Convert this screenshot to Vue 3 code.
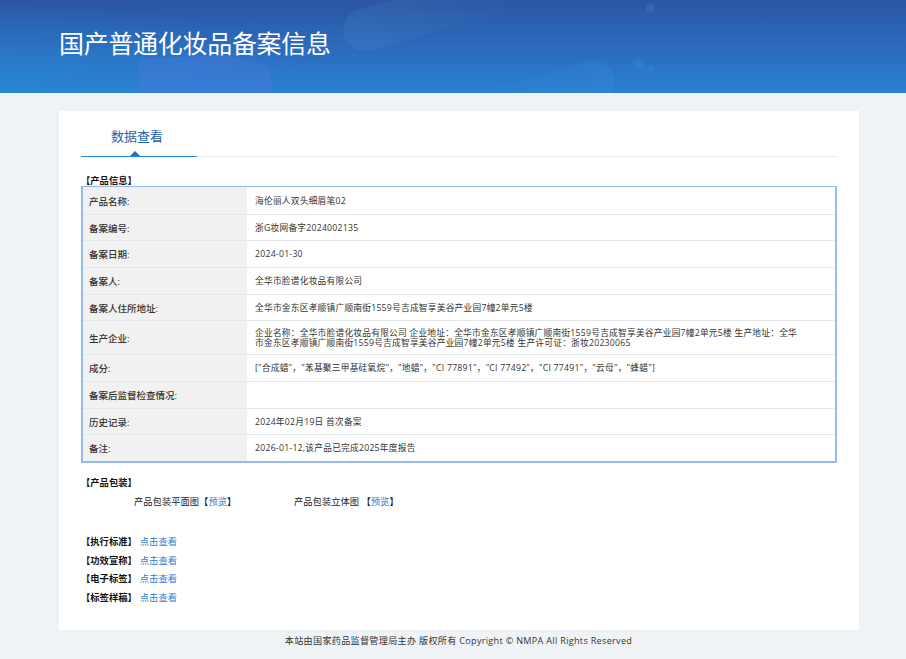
<script setup>
const rows = [
  { label: '产品名称:', value: '海伦丽人双头细眉笔02', height: 27 },
  { label: '备案编号:', value: '浙G妆网备字2024002135', height: 26 },
  { label: '备案日期:', value: '2024-01-30', height: 27 },
  { label: '备案人:', value: '全华市脸谱化妆品有限公司', height: 27 },
  { label: '备案人住所地址:', value: '全华市金东区孝顺镇广顺南街1559号吉成智享美谷产业园7幢2单元5楼', height: 26 },
  {
    label: '生产企业:',
    value: '企业名称:全华市脸谱化妆品有限公司 企业地址:全华市金东区孝顺镇广顺南街1559号吉成智享美谷产业园7幢2单元5楼 生产地址:全华市金东区孝顺镇广顺南街1559号吉成智享美谷产业园7幢2单元5楼 生产许可证:浙妆20230065'.replaceAll(':', '\uFF1A'),
    height: 34,
  },
  {
    label: '成分:',
    value: '["合成蜡","苯基聚三甲基硅氧烷","地蜡","CI 77891","CI 77492","CI 77491","云母","蜂蜡"]'.replaceAll('","', '"\uFF0C"'),
    height: 27,
  },
  { label: '备案后监督检查情况:', value: '', height: 27 },
  { label: '历史记录:', value: '2024年02月19日 首次备案', height: 26 },
  { label: '备注:', value: '2026-01-12,该产品已完成2025年度报告', height: 27 },
]

const links = [
  { label: '【执行标准】', height: 19 },
  { label: '【功效宣称】', height: 19 },
  { label: '【电子标签】', height: 18 },
  { label: '【标签样稿】', height: 19 },
]
</script>

<template>
  <div class="page">
    <header class="banner">
      <span class="banner__blob banner__blob--top"></span>
      <span class="banner__blob banner__blob--low"></span>
      <span class="banner__block"></span>
      <span class="banner__dot banner__dot--a"></span>
      <span class="banner__dot banner__dot--b"></span>
      <span class="banner__dot banner__dot--c"></span>
      <h1>国产普通化妆品备案信息</h1>
    </header>

    <main class="card">
      <div class="tabs">
        <div class="tabs__item">数据查看</div>
      </div>

      <div class="section-title section-title--first">【产品信息】</div>
      <table class="info">
        <tbody>
          <tr v-for="row in rows" :key="row.label" :style="{ height: row.height + 'px' }">
            <th>{{ row.label }}</th>
            <td>{{ row.value }}</td>
          </tr>
        </tbody>
      </table>

      <div class="section-title section-title--pack">【产品包装】</div>
      <div class="pack">
        <span class="pack__item">产品包装平面图<i>【<a href="#">预览</a>】</i></span>
        <span class="pack__item">产品包装立体图 <i>【<a href="#">预览</a>】</i></span>
      </div>

      <div class="links">
        <div v-for="item in links" :key="item.label" class="links__row" :style="{ height: item.height + 'px' }">
          <b>{{ item.label }}</b>
          <a href="#">点击查看</a>
        </div>
      </div>
    </main>

    <footer class="footer">本站由国家药品监督管理局主办 版权所有 Copyright © NMPA All Rights Reserved</footer>
  </div>
</template>

<style>
html,
body {
  margin: 0;
  background: #f0f3f6;
}
</style>

<style scoped>
.page {
  min-height: 659px;
  background: #f0f3f6;
  font-family: 'Open Sans', 'Noto Sans CJK SC', sans-serif;
  color: #333333;
}

.banner {
  position: relative;
  height: 93px;
  overflow: hidden;
  background:
    radial-gradient(ellipse 340px 90px at 0 100%, rgba(36, 140, 212, 0.5), rgba(36, 140, 212, 0)),
    linear-gradient(180deg, #2b56a3 0%, #2c6cbf 55%, #2a80d0 100%);
}

.banner h1 {
  position: relative;
  margin: 0;
  padding: 24px 0 0 59px;
  font-family: 'Noto Sans CJK SC', sans-serif;
  font-size: 25px;
  line-height: 36px;
  font-weight: 400;
  letter-spacing: -0.3px;
  color: #ffffff;
}

.banner__blob {
  position: absolute;
  display: block;
}

.banner__blob--top {
  left: 350px;
  top: 14px;
  width: 190px;
  height: 42px;
  border-radius: 21px;
  background: linear-gradient(90deg, rgba(95, 160, 215, 0.14), rgba(95, 160, 215, 0));
  transform: rotate(-16deg);
  transform-origin: 0 100%;
}

.banner__blob--low {
  left: 462px;
  top: 76px;
  width: 155px;
  height: 42px;
  border-radius: 21px;
  background: linear-gradient(90deg, rgba(60, 155, 225, 0), rgba(60, 155, 225, 0.16));
  transform: rotate(-16deg);
}

.banner__block {
  position: absolute;
  left: 139px;
  top: 55px;
  display: block;
  width: 132px;
  height: 38px;
  background: rgba(86, 118, 225, 0.3);
  clip-path: polygon(0 4px, 66% 0, 100% 12px, 100% 100%, 0 100%);
}

.banner__dot {
  position: absolute;
  display: block;
  border-radius: 50%;
  background: rgba(60, 140, 225, 0.28);
}

.banner__dot--a {
  left: 646px;
  top: 4px;
  width: 8px;
  height: 8px;
}

.banner__dot--b {
  left: 634px;
  top: 58px;
  width: 11px;
  height: 11px;
}

.banner__dot--c {
  left: 647px;
  top: 65px;
  width: 8px;
  height: 8px;
}

.card {
  box-sizing: border-box;
  width: 800px;
  height: 519px;
  margin: 18px 0 0 59px;
  padding: 0 22px;
  background: #ffffff;
}

.tabs {
  height: 45px;
  border-bottom: 1px solid #e8eaec;
}

.tabs__item {
  position: relative;
  box-sizing: border-box;
  width: 116px;
  height: 46px;
  padding: 15px 0 0 30px;
  font-family: 'Noto Sans CJK SC', sans-serif;
  font-size: 13px;
  line-height: 19px;
  color: #1f62ad;
  border-bottom: 1px solid #1f8ae0;
}

.tabs__item::after {
  content: '';
  position: absolute;
  left: 49px;
  bottom: 0;
  border-left: 5px solid transparent;
  border-right: 5px solid transparent;
  border-bottom: 5px solid #1f72c4;
}

.section-title {
  font-size: 9.3px;
  font-weight: 700;
  color: #111111;
  line-height: 10px;
}

.section-title--first {
  margin-top: 19px;
}

.section-title--pack {
  margin-top: 15px;
}

.info {
  box-sizing: border-box;
  width: 756px;
  border-collapse: separate;
  border-spacing: 0;
  border: 2px solid #94bbec;
  border-top-width: 1px;
  table-layout: fixed;
  font-size: 8.7px;
  letter-spacing: 0.25px;
}

.info th,
.info td {
  border-top: 1px solid #e4e6e8;
}

.info tr:first-child th,
.info tr:first-child td {
  border-top: 0;
}

.info th {
  width: 164px;
  padding: 0 0 0 6px;
  box-sizing: border-box;
  background: #f1f1f1;
  font-weight: 500;
  font-size: 9.5px;
  letter-spacing: 0;
  text-align: left;
  color: #333333;
}

.info td {
  padding: 0 30px 0 8px;
  line-height: 10px;
  color: #333333;
  background: #ffffff;
}

.pack {
  display: flex;
  margin-top: 7px;
  padding-left: 53px;
  font-size: 9.3px;
  line-height: 14px;
  color: #222222;
}

.pack__item {
  width: 160px;
}

.pack__item i {
  font-style: normal;
}

.pack a,
.links a {
  color: #2f7fd0;
  text-decoration: none;
}

.links {
  margin-top: 22px;
  font-size: 9.3px;
}

.links__row {
  display: flex;
  align-items: center;
  gap: 3px;
}

.links__row b {
  color: #111111;
  font-weight: 700;
}

.footer {
  padding: 4px 0 0 11px;
  font-size: 9.1px;
  line-height: 14px;
  letter-spacing: 0.3px;
  text-align: center;
  color: #333333;
}
</style>
